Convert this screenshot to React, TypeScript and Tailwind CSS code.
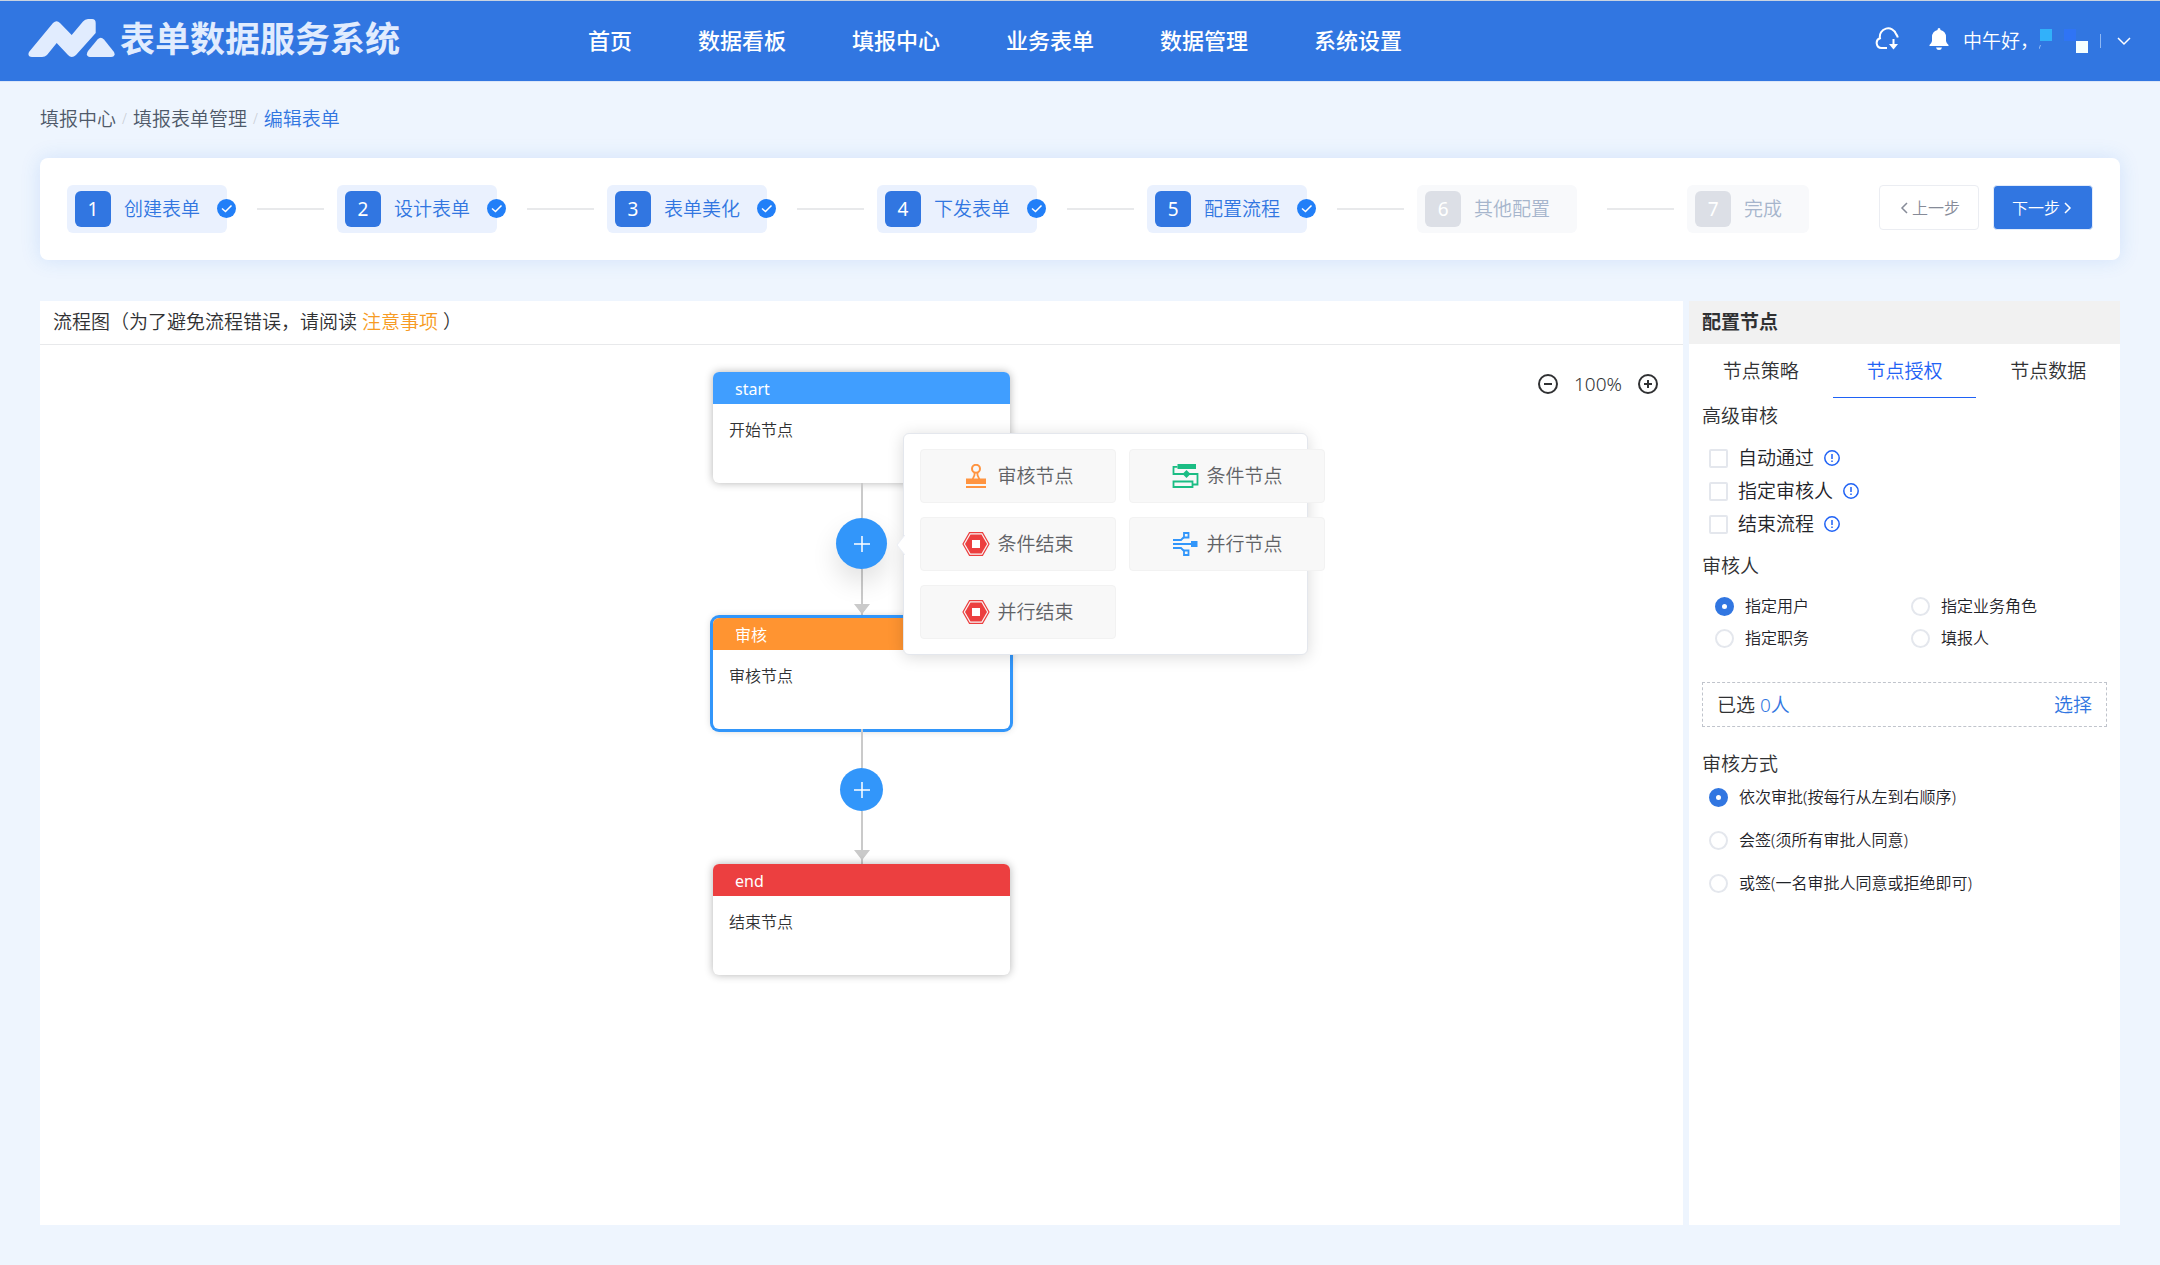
import type { ReactNode } from "react";

const navItems = ["首页", "数据看板", "填报中心", "业务表单", "数据管理", "系统设置"];

const steps = [
  { label: "创建表单", done: true },
  { label: "设计表单", done: true },
  { label: "表单美化", done: true },
  { label: "下发表单", done: true },
  { label: "配置流程", done: true },
  { label: "其他配置", done: false },
  { label: "完成", done: false },
];

const Logo = () => (
  <svg className="w-[87px] h-[39px]" viewBox="0 0 87 39" fill="#e1ecfe">
    <path d="M1 33 L25 4 Q28.700 0.500 32 4 L43.700 16 L55 2.500 Q57 0 60 0 L64 0 Q67.700 0 67.700 4 L67.700 14 L48 36 Q43.700 40 40 36 L28.700 24 L19 36 Q17 38 14 38 L4 38 Q-1 37.500 1 33 Z" />
    <path d="M60 32 L69.500 20.500 Q72.700 17 76 20.500 L86 33 Q88 37.500 83 38 L62 38 Q57 37 60 32 Z" />
  </svg>
);

const CloudIcon = () => (
  <svg className="w-6 h-6" viewBox="0 0 24 24" fill="none" stroke="white" strokeWidth="2">
    <path d="M12 21 H6.500 A5 5 0 0 1 5 11.300 A8.300 8.300 0 0 1 21 7 Q22.300 8.500 22.800 10.500" />
    <path d="M18.500 12 V20" />
    <path d="M14 17 H23 L18.500 22.500 Z" fill="white" stroke="none" />
  </svg>
);

const BellIcon = () => (
  <svg className="w-5 h-[22px]" viewBox="0 0 20 22" fill="white">
    <path d="M10 0 Q11.500 0 11.500 2 Q17 3.500 17 9 V13 Q17.300 15 19.500 17 V18 H0.500 V17 Q2.700 15 3 13 V9 Q3 3.500 8.500 2 Q8.500 0 10 0 Z" />
    <path d="M7 19.500 H13 Q12.500 22 10 22 Q7.500 22 7 19.500 Z" />
  </svg>
);

const CheckBadge = () => (
  <svg className="absolute -right-[9px] top-[14px] w-[19px] h-[19px]" viewBox="0 0 19 19" fill="none">
    <circle cx="9.500" cy="9.500" r="9.500" fill="#217ff8" />
    <path d="M5 9.500 L8.500 12.500 L14.500 6.500" stroke="white" strokeWidth="1.500" />
  </svg>
);

const Chevron = ({ d, className }: { d: string; className: string }) => (
  <svg className={className} viewBox="0 0 14 14" fill="none" stroke="currentColor" strokeWidth="1.500">
    <path d={d} />
  </svg>
);

const ZoomIcon = ({ plus }: { plus?: boolean }) => (
  <svg className="w-5 h-5" viewBox="0 0 20 20" fill="none" stroke="#303133" strokeWidth="2">
    <circle cx="10" cy="10" r="9" />
    <path d={plus ? "M6 10 H14 M10 6 V14" : "M6 10 H14"} />
  </svg>
);

const InfoIcon = () => (
  <svg className="w-4 h-4" viewBox="0 0 16 16" fill="none" stroke="#1f62f5" strokeWidth="1.500">
    <circle cx="8" cy="8" r="7.200" />
    <path d="M8 4 V9 M8 10.500 V12" />
  </svg>
);

const StampIcon = () => (
  <svg className="w-7 h-6" viewBox="0 0 28 24" fill="none">
    <circle cx="14" cy="4.800" r="4" stroke="#ff9440" strokeWidth="2" />
    <path d="M12.500 8 V11 L10.500 15.500 M15.500 8 V11 L17.500 15.500" stroke="#ff9440" strokeWidth="1.800" />
    <path d="M4 14.500 H24 V20 H4 Z M4 22 H24 V24 H4 Z" fill="#ff9440" />
  </svg>
);

const ConditionIcon = () => (
  <svg className="w-7 h-6" viewBox="0 0 28 24" fill="none" stroke="#1bbd84" strokeWidth="1.800">
    <path d="M6.500 0 H25 V5 H6.500 Z M15.500 6 L19.500 10 L15.500 14 L11.500 10 Z" fill="#1bbd84" stroke="none" />
    <path d="M6.500 2.900 H2.500 V10 H26.500 V20.500 H22" />
    <path d="M2.500 17.500 H21.500 V23 H2.500 Z" />
  </svg>
);

const ParallelIcon = () => (
  <svg className="w-7 h-6" viewBox="0 0 28 24" fill="none" stroke="#3296fa" strokeWidth="1.800">
    <path d="M2 12 H20 M2 8 H10 L13 5 M2 16 H10 L13 19" />
    <path d="M13 1 H17.500 V5.500 H13 Z M13 18.500 H17.500 V23 H13 Z" />
    <path d="M20 9 H26.500 V15 H20 Z" fill="#3296fa" stroke="none" />
  </svg>
);

const StopIcon = () => (
  <svg className="w-7 h-6" viewBox="0 0 28 24" fill="none">
    <path d="M7.500 0.600 H20.500 L27 12 L20.500 23.400 H7.500 L1 12 Z" stroke="#ec3f3f" strokeWidth="1.200" />
    <path d="M8.500 2.500 H19.500 L25 12 L19.500 21.500 H8.500 L3 12 Z" fill="#ec3f3f" />
    <path d="M10 8 H18 V16 H10 Z" fill="white" />
  </svg>
);

const nodeOptions: { label: string; icon: ReactNode }[] = [
  { label: "审核节点", icon: <StampIcon /> },
  { label: "条件节点", icon: <ConditionIcon /> },
  { label: "条件结束", icon: <StopIcon /> },
  { label: "并行节点", icon: <ParallelIcon /> },
  { label: "并行结束", icon: <StopIcon /> },
];

const Header = () => (
  <header className="flex items-center border-y border-t-[#c9d3e0] border-b-[#dbe6f8] bg-[#3176e1] h-[82px] text-white">
    <div className="flex items-center gap-[5px] pl-7 pb-[5px] w-[588px]">
      <Logo />
      <h1 className="text-[35px] leading-10 font-bold text-[#e1ecfe] whitespace-nowrap">表单数据服务系统</h1>
    </div>
    <nav className="flex gap-[66px] pb-[2px] text-[22px] font-medium whitespace-nowrap">
      {navItems.map((item) => (
        <a key={item} href="#">{item}</a>
      ))}
    </nav>
    <div className="ml-auto flex items-center pr-[29px]">
      <button aria-label="下载" className="pb-[5px] mr-[30px]"><CloudIcon /></button>
      <button aria-label="通知" className="pb-[5px] mr-[14px]"><BellIcon /></button>
      <span className="text-[19px] whitespace-nowrap">中午好，</span>
      {/* masked user name */}
      <svg className="w-[62px] h-6" viewBox="0 0 62 24">
        <rect x="1" y="0" width="12" height="12" fill="#31b1fa" />
        <rect x="25" y="0" width="12" height="12" fill="#2f74f5" />
        <rect x="37" y="12" width="12" height="12" fill="#f5ffff" />
        <path d="M0 20 L1.500 16 M61.500 5 V19" stroke="#8fb8f5" />
      </svg>
      <button aria-label="展开" className="ml-4">
        <Chevron d="M1 4 L7 10 L13 4" className="w-[14px] h-[14px]" />
      </button>
    </div>
  </header>
);

const StepBar = () => (
  <section className="mt-[25px] flex items-start rounded-lg bg-white p-[27px] shadow-[0_0_20px_rgba(49,118,225,0.15)]">
    <ol className="flex items-center">
      {steps.map((step, i) => (
        <li key={step.label} className="flex items-center">
          {i > 0 && <span className="ml-[30px] mr-[13px] h-[2px] w-[67px] bg-[#e8e9eb]" />}
          <div
            className={`relative flex items-center gap-[13px] h-12 pl-2 pr-[27px] rounded-md text-[19px] whitespace-nowrap ${
              step.done ? "bg-[#eaf1fe] text-[#3176e1]" : "bg-[#f8f9fb] text-[#a6b5cc]"
            }`}
          >
            <span
              className={`flex items-center justify-center w-9 h-9 rounded-md font-normal text-white ${
                step.done ? "bg-[#3176e1]" : "bg-[#dcdfe6]"
              }`}
            >
              {i + 1}
            </span>
            {step.label}
            {step.done && <CheckBadge />}
          </div>
        </li>
      ))}
    </ol>
    <div className="ml-auto flex gap-[14px] text-base whitespace-nowrap">
      <button className="flex items-center justify-center w-[100px] h-[45px] rounded border border-[#ebedf2] text-[#868b98]">
        <Chevron d="M9 2 L4 7 L9 12" className="w-[14px] h-[14px]" />
        上一步
      </button>
      <button className="flex items-center justify-center w-[100px] h-[45px] rounded border border-[#e3ecfb] bg-[#3176e1] text-white">
        下一步
        <Chevron d="M5 2 L10 7 L5 12" className="w-[14px] h-[14px]" />
      </button>
    </div>
  </section>
);

type NodeProps = { title: string; text: string; color: string; active?: boolean };

const FlowNode = ({ title, text, color, active }: NodeProps) => (
  <div
    className={`w-[297px] rounded-md bg-white shadow-[0_0_8px_rgba(0,0,0,0.3)] ${
      active ? "ring-[3px] ring-[#3296fa]" : ""
    }`}
  >
    <div className={`h-8 rounded-t-md pl-[22px] text-base leading-[34px] font-normal text-white ${color}`}>{title}</div>
    <div className="h-[79px] px-4 pt-[14px] text-base leading-6 text-[#303133]">{text}</div>
  </div>
);

const Connector = ({ children }: { children: ReactNode }) => (
  <div className="flex flex-col items-center h-[135px]">
    <span className="flex-1 w-[2px] bg-[#cacaca]" />
    {children}
    <span className="flex-1 w-[2px] bg-[#cacaca]" />
    <svg className="w-4 h-[14px]" viewBox="0 0 16 14" fill="#cacaca">
      <path d="M0 0 H16 L9 9 V14 H7 V9 Z" />
    </svg>
  </div>
);

const PlusIcon = () => (
  <svg className="w-[18px] h-[18px]" viewBox="0 0 18 18" stroke="white" strokeWidth="1.500">
    <path d="M1 9 H17 M9 1 V17" />
  </svg>
);

const NodePopover = () => (
  <div className="absolute left-[67px] -top-[85px] z-10 w-[405px] rounded-md border border-[#e4e7ed] bg-white px-4 py-[15px] shadow-[0_2px_16px_rgba(0,0,0,0.15)]">
    <svg className="absolute -left-[8px] top-[101px] w-[9px] h-5" viewBox="0 0 9 20" fill="white">
      <path d="M9 0 L1 10 L9 20" stroke="#ebeef5" />
    </svg>
    <div className="grid grid-cols-[196px_196px] gap-x-[13px] gap-y-[14px]">
      {nodeOptions.map((option) => (
        <button
          key={option.label}
          className="flex h-[54px] items-center justify-center gap-[7px] rounded border border-[#f2f2f2] bg-[#f8f8f8] text-[19px] text-[#606266]"
        >
          {option.icon}
          {option.label}
        </button>
      ))}
    </div>
  </div>
);

const FlowPanel = () => (
  <section className="flex-1 bg-white">
    <h2 className="h-11 border-b border-[#e8e9eb] px-[13px] text-[19px] leading-[42px] text-[#303133] whitespace-pre">
      流程图（为了避免流程错误，请阅读 <a href="#" className="text-[#f79b24]">注意事项</a> ）
    </h2>
    <div className="relative flex flex-col items-center pt-[27px]">
      <div className="absolute right-[25px] top-[25px] flex items-center gap-4 text-[19px] text-[#303133]">
        <button aria-label="缩小"><ZoomIcon /></button>
        100%
        <button aria-label="放大"><ZoomIcon plus /></button>
      </div>
      <FlowNode title="start" text="开始节点" color="bg-[#409eff]" />
      <Connector>
        <div className="relative">
          <button
            aria-label="添加节点"
            className="flex h-[51px] w-[51px] items-center justify-center rounded-full bg-[#3296fa] shadow-[0_13px_27px_rgba(0,0,0,0.12)]"
          >
            <PlusIcon />
          </button>
          <NodePopover />
        </div>
      </Connector>
      <FlowNode title="审核" text="审核节点" color="bg-[#ff9431]" active />
      <Connector>
        <button aria-label="添加节点" className="flex h-[43px] w-[43px] items-center justify-center rounded-full bg-[#3296fa]">
          <PlusIcon />
        </button>
      </Connector>
      <FlowNode title="end" text="结束节点" color="bg-[#ec3f40]" />
    </div>
  </section>
);

const radioClass =
  "h-[19px] w-[19px] shrink-0 appearance-none rounded-full border-2 border-[#e4e7ed] bg-white checked:border-[7px] checked:border-[#3176e1]";

const Radio = ({ name, label, checked }: { name: string; label: string; checked?: boolean }) => (
  <label className="flex items-center gap-[11px] text-base leading-6 text-[#1f2329]">
    <input type="radio" name={name} defaultChecked={checked} className={radioClass} />
    {label}
  </label>
);

const ConfigPanel = () => (
  <aside className="w-[431px] bg-white text-[19px] leading-7 text-[#303133]">
    <h2 className="h-[43px] bg-[#f1f1f1] px-[13px] leading-[42px] font-bold">配置节点</h2>
    <div className="grid grid-cols-3">
      <button className="h-[54px]">节点策略</button>
      <button className="h-[54px] border-b border-[#1f62f5] text-[#1f62f5]">节点授权</button>
      <button className="h-[54px]">节点数据</button>
    </div>
    <div className="px-[13px] pt-1">
      <h3>高级审核</h3>
      <div className="mt-[14px] flex flex-col gap-[5px] px-[7px] text-[#1f2329]">
        {["自动通过", "指定审核人", "结束流程"].map((label) => (
          <div key={label} className="flex items-center gap-[10px]">
            <label className="flex items-center gap-[10px]">
              <input
                type="checkbox"
                className="h-[19px] w-[19px] appearance-none rounded-xs border-2 border-[#e4e7ed] checked:bg-[#3176e1]"
              />
              {label}
            </label>
            <InfoIcon />
          </div>
        ))}
      </div>
      <h3 className="mt-[14px]">审核人</h3>
      <div className="mt-[14px] grid grid-cols-2 gap-y-2 pl-[13px]">
        <Radio name="reviewer" label="指定用户" checked />
        <Radio name="reviewer" label="指定业务角色" />
        <Radio name="reviewer" label="指定职务" />
        <Radio name="reviewer" label="填报人" />
      </div>
      <div className="mt-8 flex h-[45px] items-center justify-between border border-dashed border-[#c0c4cc] px-[14px]">
        <span>
          已选 <span className="text-[#3176e1]">0人</span>
        </span>
        <button className="text-[#3176e1]">选择</button>
      </div>
      <h3 className="mt-[23px]">审核方式</h3>
      <div className="mt-[7px] flex flex-col gap-[19px] px-[7px]">
        <Radio name="mode" label="依次审批(按每行从左到右顺序)" checked />
        <Radio name="mode" label="会签(须所有审批人同意)" />
        <Radio name="mode" label="或签(一名审批人同意或拒绝即可)" />
      </div>
    </div>
  </aside>
);

const App = () => {
  return (
    <div className="flex min-h-screen flex-col bg-[#eef5fe] font-[350] font-['Noto_Sans','Noto_Sans_CJK_SC',sans-serif]">
      <Header />
      <main className="flex flex-1 flex-col px-10 pb-10">
        <div className="mt-[23px] flex items-center gap-[6px] text-[19px] leading-7 text-[#4e5969]">
          <a href="#">填报中心</a>
          <span className="text-sm text-[#c9cdd4]">/</span>
          <a href="#">填报表单管理</a>
          <span className="text-sm text-[#c9cdd4]">/</span>
          <a href="#" className="text-[#3176e1]">编辑表单</a>
        </div>
        <StepBar />
        <div className="mt-[41px] flex flex-1 gap-[6px]">
          <FlowPanel />
          <ConfigPanel />
        </div>
      </main>
    </div>
  );
};

export default App;
